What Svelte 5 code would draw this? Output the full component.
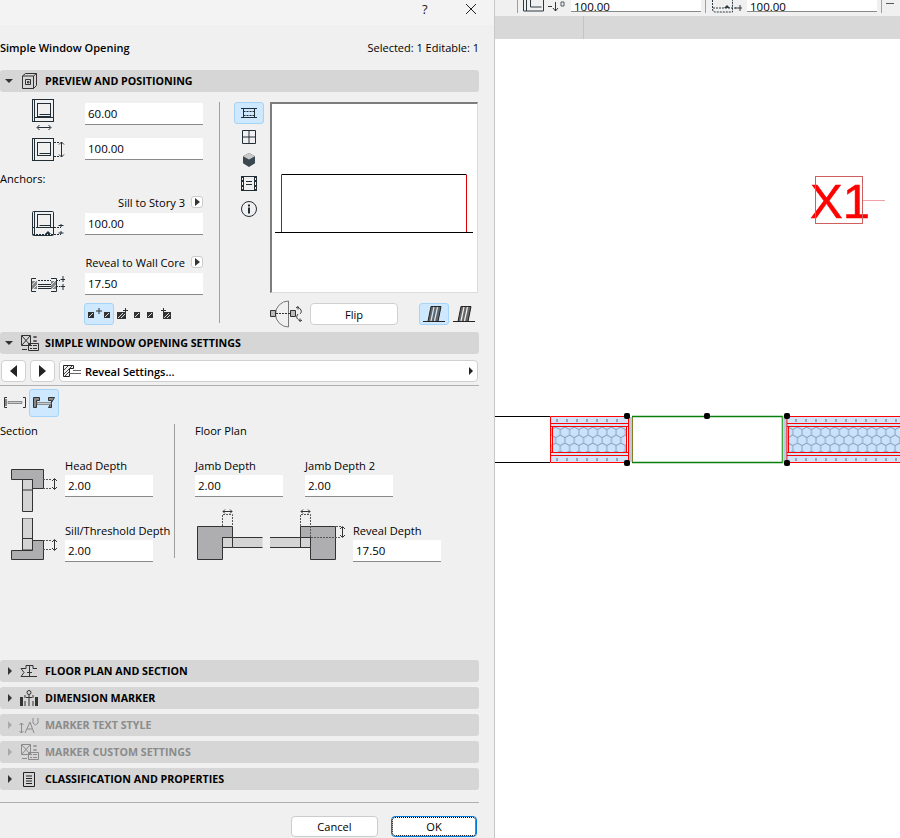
<script>
  const handles = [[627, 416], [627, 463], [707, 416], [787, 416], [787, 463]];
</script>

<div class="app">
  <div class="dialog">
    <div class="titlebar">
      <span class="help">?</span>
      <svg class="close" width="12" height="12" viewBox="0 0 12 12"><path d="M1 1l10 10M11 1L1 11" stroke="#222" fill="none"/></svg>
    </div>
    <div class="body">
      <div class="heading">
        <b>Simple Window Opening</b>
        <span>Selected: 1 Editable: 1</span>
      </div>

      <div class="bar">
        <i class="tri open"></i>
        <svg class="baricon first" width="15" height="16" viewBox="0 0 15 16"><path d="M.5 3l3-2.500h11v12l-3 3H.500zM.5 3h11v12.500M11.500 3l3-2.500" fill="none" stroke="#333"/><path d="M3.500 6.500h5v5h-5zM5.500 8.500h1.500v1.500H5.500z" fill="none" stroke="#333"/></svg>
        <span>PREVIEW AND POSITIONING</span>
      </div>

      <div class="preview-section">
        <div class="sizes">
          <div class="row">
            <svg width="26" height="33" viewBox="0 0 26 33"><g fill="none" stroke="#222e36"><rect x="1.500" y="1.500" width="21" height="22"/><path d="M3.500 1.500v22"/><rect x="6.500" y="5.500" width="13" height="13"/><path d="M8.500 16.500h11M3.500 19.500h19"/><path d="M6.500 29.500h13M8.500 27l-2.500 2.500 2.500 2.500M17.500 27l2.500 2.500-2.500 2.500"/></g></svg>
            <input value="60.00" />
          </div>
          <div class="row second">
            <svg width="34" height="25" viewBox="0 0 34 25"><g fill="none" stroke="#222e36"><rect x="1.500" y="1.500" width="21" height="22"/><path d="M3.500 1.500v22"/><rect x="6.500" y="5.500" width="13" height="13"/><path d="M8.500 16.500h11"/><path d="M23 5.500h5M23 19.500h5" stroke-dasharray="2 1"/><path d="M30.500 5v15M28 7.500L30.500 5 33 7.500M28 17.500l2.500 2.500 2.500-2.500"/></g></svg>
            <input value="100.00" />
          </div>
          <div class="anchors">Anchors:</div>
          <div class="caption"><span>Sill to Story 3</span><button class="mini"><i></i></button></div>
          <div class="row">
            <svg width="34" height="28" viewBox="0 0 34 28"><g fill="none" stroke="#222e36"><rect x="1.500" y="1.500" width="21" height="24" rx="1"/><path d="M3.500 1.500v24"/><rect x="6.500" y="4.500" width="13" height="13"/><path d="M8.500 15.500h11"/><path d="M2 17.500h28M2 24.500h28" stroke-dasharray="2 1"/><path d="M30 14v3M30 21v3M27.500 15.500h5M27.500 23h5"/></g><path d="M14 24l3-3 3 3z" fill="#222e36"/></svg>
            <input value="100.00" />
          </div>
          <div class="caption reveal"><span>Reveal to Wall Core</span><button class="mini"><i></i></button></div>
          <div class="row">
            <svg width="34" height="18" viewBox="0 0 34 18"><g fill="none" stroke="#222e36"><path d="M5 3.500H.5v13H5M20 3.500h5.500v13H20"/><path d="M7 5.500h13M25 5.500h4M25 11.500h4" stroke-dasharray="2 1"/><path d="M7 9.500h13M7 11.500h13M7 13.500h13"/><path d="M32 1v6M32 9v6M29.500 4.500h5M29.500 11.500h5"/></g><path d="M1 6h5v8H1zM20 6h5v8h-5z" fill="#888"/><path d="M1 10l4-4M2 14l4-4M20 10l4-4M21 14l4-4" stroke="#ddd"/></svg>
            <input value="17.50" />
          </div>
          <div class="anchor-icons">
            <button class="toggle active anchor-on">
              <svg width="24" height="14" viewBox="0 0 24 14"><path d="M1 5h6v6H1zM17 5h6v6h-6z" fill="#333"/><path d="M2 10l4-4M18 10l4-4" stroke="#ddd"/><path d="M12 1v6M9 4h6" stroke="#333"/></svg>
            </button>
            <svg class="a1" width="11" height="12" viewBox="0 0 11 12"><path d="M0 4h9v7H0z" fill="#333"/><path d="M1 10l5-5M4 10l4-4" stroke="#ddd"/><path d="M8.500 0v5M6 2.500h5" stroke="#333"/></svg>
            <svg class="a2" width="7" height="12" viewBox="0 0 7 12"><path d="M0 4h6v6H0z" fill="#333"/><path d="M1 9l4-4" stroke="#ddd"/></svg>
            <svg class="a3" width="7" height="12" viewBox="0 0 7 12"><path d="M0 4h6v6H0z" fill="#333"/><path d="M1 9l4-4" stroke="#ddd"/></svg>
            <svg class="a4" width="10" height="12" viewBox="0 0 10 12"><path d="M2 4h8v7H2z" fill="#333"/><path d="M3 10l5-5M6 10l3-3" stroke="#ddd"/><path d="M2.500 0v5M0 2.500h5" stroke="#333"/></svg>
          </div>
        </div>

        <div class="vline"></div>

        <div class="views">
          <button class="toggle active view">
            <svg width="18" height="12" viewBox="0 0 18 12"><g fill="none" stroke="#222e36"><path d="M1 1.500h16M1 10.500h16M3.500 1.500v9M14.500 1.500v9"/><path d="M3.500 4.500h11M3.500 8.500h11" stroke-dasharray="2 1"/></g></svg>
          </button>
          <svg class="v2" width="14" height="14" viewBox="0 0 14 14"><path d="M.5.500h13v13H.500zM7 .5v13M.5 7h13" fill="none" stroke="#222e36"/></svg>
          <svg class="v3" width="14" height="14" viewBox="0 0 14 14"><path d="M7 0l6 3.300v7L7 14l-6-3.700v-7z" fill="#3c4850"/><path d="M7 0l6 3.300L7 6.500 1 3.300z" fill="#c9c9c9"/></svg>
          <svg class="v4" width="16" height="15" viewBox="0 0 16 15"><path d="M0 0h16v15H0z" fill="#222e36"/><path d="M3 1h10v13H3z" fill="#f0f0f0"/><path d="M1 2h1v2H1zM1 6h1v3H1zM1 11h1v2H1zM14 2h1v2h-1zM14 6h1v3h-1zM14 11h1v2h-1z" fill="#f0f0f0"/><path d="M5 5.500h6M5 8.500h6" stroke="#222e36"/></svg>
          <svg class="v5" width="16" height="16" viewBox="0 0 16 16"><circle cx="8" cy="8" r="7.500" fill="none" stroke="#222e36"/><path d="M7 6.500h2v6H7zM7 3.500h2v2H7z" fill="#222e36"/></svg>
        </div>

        <div class="stage">
          <svg class="preview" width="208" height="191" viewBox="0 0 205 188">
            <path d="M9.500 70.500H194.500" stroke="#000" fill="none"/>
            <path d="M9.500 71v58M194.500 71v58" stroke="#e00000" fill="none"/>
            <path d="M3 128.500h198" stroke="#000" fill="none"/>
          </svg>
          <div class="flip-row">
            <svg width="34" height="28" viewBox="0 0 34 28"><path d="M18.500 1A13 13 0 0 0 18.500 27z" fill="none" stroke="#777"/><path d="M.5 10.500h5v6h-5zM20.500 10.500h5v6h-5z" fill="#bbb" stroke="#333"/><path d="M6 13.500h14" stroke="#333" stroke-dasharray="2 1"/><path d="M28 7c4 3 4 5 2 7M30 21c-4-3-4-4-2-7M26 8l2-1.500V9.500M32 20l-2 1.500V18.500" fill="none" stroke="#333"/></svg>
            <button class="flip">Flip</button>
            <button class="toggle active side">
              <svg width="22" height="17" viewBox="0 0 22 17"><path d="M0 15.500h22" stroke="#222"/><path d="M8 .5h10l-3 15H5z" fill="#666" stroke="#222"/><path d="M11 1L8 15M14.500 1l-3 14" stroke="#cde8ff" stroke-width="1.200"/></svg>
            </button>
            <svg class="side2" width="22" height="17" viewBox="0 0 22 17"><path d="M0 15.500h22" stroke="#222"/><path d="M8 .5h10l-3 15H5z" fill="#666" stroke="#222"/><path d="M11 1L8 15M14.500 1l-3 14" stroke="#f0f0f0" stroke-width="1.200"/></svg>
          </div>
        </div>
      </div>

      <div class="bar">
        <i class="tri open"></i>
        <svg class="baricon" width="19" height="17" viewBox="0 0 19 17"><g fill="none" stroke="#333"><path d="M1.500.5h9v10h-9zM2 1l8 9M10 1l-8 9"/><path d="M8.500 8.500h10v7h-10zM10 10.500h2M13 10.500h4M10 13.500h2M13 13.500h4"/><path d="M15 1v2M15 5v2M13 2h4M13 6h4"/><path d="M2 14.500h5"/></g></svg>
        <span>SIMPLE WINDOW OPENING SETTINGS</span>
      </div>

      <div class="pager">
        <button class="nav"><i class="left"></i></button>
        <button class="nav"><i class="right"></i></button>
        <button class="select">
          <svg width="18" height="12" viewBox="0 0 18 12"><path d="M.5.5h10v3h-4v8h-6z" fill="#f0f0f0" stroke="#222"/><path d="M1 5l4-4M1 9l8-8M2 11l4-4" stroke="#444"/><path d="M10 5.500h8M6 8.500h12" stroke="#666"/></svg>
          <span>Reveal Settings...</span>
          <i class="right small"></i>
        </button>
      </div>
      <hr class="rule" />

      <div class="type-row">
        <span class="type">
          <svg width="24" height="12" viewBox="0 0 24 12"><path d="M4 .5H1.500v10H4M20 .5h2.500v10H20" fill="none" stroke="#333"/><path d="M2 2h2v7H2z" fill="#888"/><path d="M5 4.500h14v2H5z" fill="#ccc" stroke="#777" stroke-width=".8"/></svg>
        </span>
        <button class="toggle active type-on">
          <svg width="24" height="12" viewBox="0 0 24 12"><path d="M1.500.5h6v3h-3v7h-3zM22.500.5h-6v3h3v7h-3z" fill="#888" stroke="#333"/><path d="M5 5.500h14v2H5z" fill="#ccc" stroke="#777" stroke-width=".8"/></svg>
        </button>
      </div>

      <div class="reveal-grid">
        <div class="col-section">
          <div class="group-title">Section</div>
          <div class="depth head">
            <svg width="48" height="44" viewBox="0 0 48 44"><path d="M1.500.5h32v19h-11v-9h-21z" fill="#aeaeb0" stroke="#333"/><path d="M12.500 10.500h10v32h-10z" fill="#d4d4d4" stroke="#333"/><path d="M12.500 21h10" stroke="#333"/><path d="M33 10.500h9M33 19.500h9" stroke="#555" stroke-dasharray="2 1" fill="none"/><path d="M44.500 10v10M42 12l2.500-2.500L47 12M42 18l2.500 2.500L47 18" stroke="#333" fill="none"/></svg>
            <label>Head Depth<input value="2.00" /></label>
          </div>
          <div class="depth sill">
            <svg width="48" height="44" viewBox="0 0 48 44"><path d="M12.500 0h10v32h-10z" fill="#d4d4d4" stroke="#333"/><path d="M12.500 20.500h10" stroke="#333"/><path d="M22.500 22.500h11v19h-32v-9h21z" fill="#aeaeb0" stroke="#333"/><path d="M33 22.500h9M33 31.500h9" stroke="#555" stroke-dasharray="2 1" fill="none"/><path d="M44.500 22v10M42 24l2.500-2.500L47 24M42 30l2.500 2.500L47 30" stroke="#333" fill="none"/></svg>
            <label>Sill/Threshold Depth<input value="2.00" /></label>
          </div>
        </div>
        <div class="vline tall"></div>
        <div class="col-plan">
          <div class="group-title">Floor Plan</div>
          <div class="jambs">
            <label>Jamb Depth<input value="2.00" /></label>
            <label>Jamb Depth 2<input value="2.00" /></label>
          </div>
          <div class="plan-bottom">
            <svg width="150" height="52" viewBox="0 0 150 52">
              <path d="M.5 18.500h35v11h-10v22H.500z" fill="#aeaeb0" stroke="#333"/>
              <path d="M25.500 29.500h10v10h-10zM35.500 29.500h30v10h-30z" fill="#d4d4d4"/>
              <path d="M25.500 29.500h10v10h-10zM35.500 29.500h30M35.500 39.500h30" fill="none" stroke="#333"/>
              <path d="M25.500 18V6.500h10V18" fill="none" stroke="#555" stroke-dasharray="2 1"/>
              <path d="M26 3.500h9M28 1.500l-2 2 2 2M33 1.500l2 2-2 2" fill="none" stroke="#333"/>
              <path d="M103.500 18.500h35v33h-25v-22h-10z" fill="#aeaeb0" stroke="#333"/>
              <path d="M73 29.500h30v10H73zM103.500 29.500h10v10h-10z" fill="#d4d4d4"/>
              <path d="M73 29.500h40.500M73 39.500h40.500M103.500 29.500v10M113.500 29.500v10" fill="none" stroke="#333"/>
              <path d="M103.500 18V6.500h10V29" fill="none" stroke="#555" stroke-dasharray="2 1"/>
              <path d="M104 3.500h9M106 1.500l-2 2 2 2M111 1.500l2 2-2 2" fill="none" stroke="#333"/>
              <path d="M114 29.500h30M139 18.500h5" fill="none" stroke="#555" stroke-dasharray="2 1"/>
              <path d="M145.500 19v10M143 21l2.500-2.500L148 21M143 27l2.500 2.500L148 27" fill="none" stroke="#333"/>
            </svg>
            <label class="reveal-depth">Reveal Depth<input value="17.50" /></label>
          </div>
        </div>
      </div>

      <div class="stack">
        <div class="bar closed">
          <i class="tri"></i>
          <svg class="baricon" width="18" height="12" viewBox="0 0 18 12"><path d="M1 3.500h5v-3h7v3h4M1 11.500h16M1 3.500l3 4-3 4M9.500 .5v11M7 7.500h5" fill="none" stroke="#333"/></svg>
          <span>FLOOR PLAN AND SECTION</span>
        </div>
        <div class="bar closed">
          <i class="tri"></i>
          <svg class="baricon dim" width="20" height="17" viewBox="0 0 20 17"><circle cx="10" cy="2.500" r="2" fill="none" stroke="#333"/><path d="M1 7h3v9H1zM16 7h3v9h-3z" fill="#333"/><path d="M10 5v11M7 7.500h6M6 5v3M14 5v3M6 11v5M14 11v5" stroke="#333" fill="none"/></svg>
          <span>DIMENSION MARKER</span>
        </div>
        <div class="bar closed off">
          <i class="tri"></i>
          <svg class="baricon dim" width="20" height="17" viewBox="0 0 20 17"><path d="M2.500 6v10M.5 8l2-2 2 2M.5 14l2 2 2-2M6 16l5-11 4 11M8 12h5M14 1v5l2.500 2 2.500-2V1" fill="none" stroke="#8b8b8b"/></svg>
          <span>MARKER TEXT STYLE</span>
        </div>
        <div class="bar closed off">
          <i class="tri"></i>
          <svg class="baricon" width="19" height="17" viewBox="0 0 19 17"><g fill="none" stroke="#8b8b8b"><path d="M1.500.5h9v10h-9zM2 1l8 9M10 1l-8 9"/><path d="M8.500 8.500h10v7h-10zM10 10.500h2M13 10.500h4M10 13.500h2M13 13.500h4"/><path d="M15 1v2M15 5v2M13 2h4M13 6h4"/><path d="M2 14.500h5"/></g></svg>
          <span>MARKER CUSTOM SETTINGS</span>
        </div>
        <div class="bar closed">
          <i class="tri"></i>
          <svg class="baricon doc" width="12" height="15" viewBox="0 0 12 15"><path d="M.5.500h11v14H.500zM3 4h6M3 6.500h6M3 9h6M3 11.500h6" fill="none" stroke="#222"/></svg>
          <span>CLASSIFICATION AND PROPERTIES</span>
        </div>
      </div>

      <hr class="rule foot" />
      <div class="actions">
        <button class="cancel">Cancel</button>
        <button class="ok">OK</button>
      </div>
    </div>
  </div>

  <div class="canvas">
    <div class="toolbar">
      <span class="sep first"></span>
      <svg class="tb-icon" width="46" height="16" viewBox="0 0 46 16"><path d="M4.500-3v14h17V-3" fill="none" stroke="#2c3840"/><path d="M1.500-3v14h3M8.500-3v10h11" fill="none" stroke="#2c3840"/><path d="M26 6.500h4M33.500 2v9M31 8l2.500 3L36 8" fill="none" stroke="#2c3840"/><path d="M39 2h3v4h-3z" fill="none" stroke="#2c3840" stroke-width=".8"/></svg>
      <div class="tb-input"><span>100.00</span></div>
      <span class="sep"></span>
      <svg class="tb-icon two" width="34" height="16" viewBox="0 0 34 16"><path d="M2.500-3v12c0 2 1 3 3 3h17V-3M3 8h24" fill="none" stroke="#2c3840" stroke-dasharray="2 1"/><path d="M14 8l3-3 3 3z" fill="#2c3840"/><path d="M25 8h7M30 5v6" fill="none" stroke="#2c3840"/></svg>
      <div class="tb-input"><span>100.00</span></div>
      <span class="sep"></span>
      <span class="dash"></span>
    </div>
    <div class="infobar"><span class="cell"></span></div>
    <svg class="drawing" width="405" height="799" viewBox="495 39 405 799">
      <defs>
        <pattern id="hex" x="551" y="427" width="9.300" height="16" patternUnits="userSpaceOnUse">
          <rect width="9.300" height="16" fill="#c9e3fd"/>
          <path d="M0 8V2.670L4.650 0l4.650 2.670V8L4.650 10.670zM4.650 10.670V16" fill="none" stroke="#8da0bb" stroke-width="1"/>
        </pattern>
        <pattern id="dots" x="551" y="417" width="10" height="9" patternUnits="userSpaceOnUse">
          <rect width="10" height="9" fill="#d4e4f8"/>
          <rect x="4" y="2" width="2" height="3" fill="#9aa6b8"/>
        </pattern>
      </defs>

      <text x="810" y="218" class="x1">X1</text>
      <rect x="815.500" y="176.500" width="47" height="47" fill="none" stroke="#d06060"/>
      <path d="M863 200.500h22" stroke="#f0a0a8" fill="none"/>

      <path d="M495 416.500h55M495 462.500h55" stroke="#000" fill="none"/>

      <rect x="551" y="417" width="77" height="9" fill="#d4e4f8"/>
      <rect x="551" y="427" width="76" height="25" fill="url(#hex)"/>
      <rect x="551" y="453" width="77" height="9" fill="#d4e4f8"/>
      <path d="M556 420.500h2M566 420.500h2M576 420.500h2M586 420.500h2M596 420.500h2M606 420.500h2M616 420.500h2M556 459.500h2M566 459.500h2M576 459.500h2M586 459.500h2M596 459.500h2M606 459.500h2M616 459.500h2" stroke="#9aa6b8" fill="none" stroke-width="3"/>
      <path d="M550.500 416.500h78v46h-78zM550.500 423.500h78M550.500 426.500h78M550.500 452.500h78M550.500 455.500h78M552.500 427v25M626.500 427v25" fill="none" stroke="#f00"/>

      <rect x="629" y="417" width="3" height="45" fill="#b9cbe0"/>
      <path d="M632.500 416v47" stroke="#8a7a20" fill="none"/>
      <path d="M632 416.500h150.500v46H632" fill="none" stroke="#0b7f0b" stroke-width="1.500"/>
      <path d="M782.500 416v47" stroke="#3fa83f" fill="none"/>
      <rect x="784" y="417" width="3" height="45" fill="#b9cbe0"/>

      <rect x="788" y="417" width="112" height="9" fill="#d4e4f8"/>
      <rect x="789" y="427" width="111" height="25" fill="url(#hex)"/>
      <rect x="788" y="453" width="112" height="9" fill="#d4e4f8"/>
      <path d="M795 420.500h2M805 420.500h2M815 420.500h2M825 420.500h2M835 420.500h2M845 420.500h2M855 420.500h2M865 420.500h2M875 420.500h2M885 420.500h2M895 420.500h2M795 459.500h2M805 459.500h2M815 459.500h2M825 459.500h2M835 459.500h2M845 459.500h2M855 459.500h2M865 459.500h2M875 459.500h2M885 459.500h2M895 459.500h2" stroke="#9aa6b8" fill="none" stroke-width="3"/>
      <path d="M900 416.500h-113v46h113M787 423.500h113M787 426.500h113M787 452.500h113M787 455.500h113M788.500 427v25" fill="none" stroke="#f00"/>

      {#each handles as [x, y]}
        <rect x={x - 3} y={y - 3} width="6" height="6" rx="2" fill="#000" />
      {/each}
    </svg>
  </div>
</div>

<style>
  :global(body) {
    margin: 0;
    background: #fff;
  }

  .app {
    display: flex;
    width: 900px;
    height: 838px;
    overflow: hidden;
    font-family: "Open Sans", "Noto Sans", sans-serif;
    font-size: 11.1px;
    color: #000;
  }

  button {
    font: inherit;
    color: inherit;
    padding: 0;
  }

  svg {
    display: block;
    flex: none;
  }

  input {
    box-sizing: border-box;
    width: 118px;
    height: 22px;
    padding: 0 3px;
    border: 0;
    border-bottom: 1px solid #8a8a8a;
    background: #fff;
    font: inherit;
    font-size: 11.5px;
    color: #000;
    outline: none;
  }

  .dialog {
    flex: none;
    width: 494px;
    height: 838px;
    background: #f0f0f0;
  }

  .titlebar {
    position: relative;
    height: 25px;
    background: #f3f3f3;
  }

  .help {
    position: absolute;
    left: 422px;
    top: 0;
    font-size: 13px;
    color: #222;
  }

  .close {
    position: absolute;
    left: 465px;
    top: 3px;
  }

  .body {
    padding-right: 15px;
  }

  .heading {
    display: flex;
    justify-content: space-between;
    align-items: center;
    height: 45px;
    font-size: 11px;
  }

  .heading b {
    font-weight: 600;
  }

  .bar {
    display: flex;
    align-items: center;
    height: 22px;
    background: #d6d6d6;
    border-radius: 3px;
    font-size: 10.7px;
    font-weight: 700;
    position: relative;
  }

  .bar span {
    position: absolute;
    left: 45px;
    top: 3.500px;
  }

  .bar.off {
    color: #8b8b8b;
  }

  .tri {
    display: block;
    margin-left: 8px;
    width: 0;
    height: 0;
    border-left: 4px solid #333;
    border-top: 4px solid transparent;
    border-bottom: 4px solid transparent;
  }

  .tri.open {
    margin-left: 5px;
    border-top: 4px solid #333;
    border-left: 4px solid transparent;
    border-right: 4px solid transparent;
    border-bottom: 0;
  }

  .off .tri {
    border-left-color: #aaa;
  }

  .baricon {
    margin-left: 7px;
  }

  .baricon.first {
    margin-left: 9px;
  }

  .closed .baricon {
    margin-left: 8px;
  }

  .closed .baricon.dim {
    margin-left: 7px;
  }

  .closed .baricon.doc {
    margin-left: 11px;
  }

  .preview-section {
    display: flex;
    height: 240px;
  }

  .sizes {
    width: 219px;
    flex: none;
  }

  .row {
    display: flex;
    align-items: center;
    justify-content: space-between;
    width: 203px;
    padding-left: 31px;
    box-sizing: border-box;
    height: 22px;
    margin-top: 11px;
  }

  .row.second {
    margin-top: 13px;
  }

  .anchors {
    margin-top: 12px;
    height: 14px;
    line-height: 14px;
  }

  .caption {
    display: flex;
    justify-content: flex-end;
    align-items: center;
    gap: 6px;
    width: 203px;
    height: 14px;
    margin-top: 9px;
  }

  .caption.reveal {
    margin-top: 20px;
  }

  .caption + .row {
    margin-top: 4px;
  }

  .mini {
    box-sizing: border-box;
    width: 12px;
    height: 12px;
    border: 1px solid #ccc;
    border-radius: 3px;
    background: #fff;
    display: flex;
    align-items: center;
    justify-content: center;
  }

  .mini i {
    width: 0;
    height: 0;
    border-left: 5px solid #333;
    border-top: 4px solid transparent;
    border-bottom: 4px solid transparent;
  }

  .anchor-icons {
    display: flex;
    align-items: center;
    margin: 8px 0 0 84px;
  }

  .a1 {
    margin-left: 3px;
  }

  .a2 {
    margin-left: 6px;
  }

  .a3 {
    margin-left: 6px;
  }

  .a4 {
    margin-left: 7px;
  }

  .toggle {
    display: flex;
    align-items: center;
    justify-content: center;
    box-sizing: border-box;
    border: 1px solid #a6d4f7;
    border-radius: 3px;
  }

  .toggle.active {
    background: #cde8ff;
  }

  .anchor-on {
    width: 30px;
    height: 22px;
  }

  .vline {
    flex: none;
    width: 1px;
    height: 221px;
    margin-top: 10px;
    background: #a0a0a0;
  }

  .views {
    flex: none;
    width: 36px;
    margin-left: 14px;
    padding-top: 10px;
  }

  .view {
    width: 30px;
    height: 22px;
  }

  .views svg {
    margin-left: 8px;
  }

  .views .toggle svg {
    margin-left: 0;
  }

  .v2 {
    margin-top: 6px;
  }

  .v3 {
    margin-top: 9px;
  }

  .v4 {
    margin-top: 9px;
    transform: translateX(-1px);
  }

  .v5 {
    margin-top: 10px;
    transform: translateX(-1px);
  }

  .stage {
    padding-top: 10px;
  }

  .preview {
    box-sizing: border-box;
    background: #fff;
    border-top: 2px solid #7d7d7d;
    border-left: 2px solid #7d7d7d;
    border-right: 1px solid #dcdcdc;
    border-bottom: 1px solid #dcdcdc;
  }

  .flip-row {
    display: flex;
    align-items: center;
    margin-top: 7px;
    height: 28px;
  }

  .flip {
    box-sizing: border-box;
    width: 88px;
    height: 22px;
    margin-left: 6px;
    background: #fff;
    border: 1px solid #d0d0d0;
    border-radius: 4px;
  }

  .side {
    width: 30px;
    height: 22px;
    margin-left: 21px;
  }

  .side2 {
    margin-left: 4px;
  }

  .pager {
    display: flex;
    gap: 4px;
    padding: 6px 1px 0 1px;
  }

  .nav {
    box-sizing: border-box;
    width: 25px;
    height: 22px;
    background: #fff;
    border: 1px solid #d0d0d0;
    border-radius: 4px;
    display: flex;
    align-items: center;
    justify-content: center;
  }

  .left {
    border-right: 7px solid #222;
    border-top: 6px solid transparent;
    border-bottom: 6px solid transparent;
  }

  .right {
    border-left: 7px solid #222;
    border-top: 6px solid transparent;
    border-bottom: 6px solid transparent;
  }

  .select {
    box-sizing: border-box;
    flex: 1;
    height: 22px;
    display: flex;
    align-items: center;
    background: #fff;
    border: 1px solid #d0d0d0;
    border-radius: 4px;
    padding: 0 4px 0 3px;
    font-size: 11px;
    font-weight: 600;
  }

  .select span {
    margin-left: 4px;
    flex: 1;
    text-align: left;
  }

  .right.small {
    border-left-width: 4px;
    border-top-width: 4px;
    border-bottom-width: 4px;
  }

  .rule {
    margin: 3px 0 0;
    border: 0;
    height: 1px;
    background: #b0b0b0;
  }

  .type-row {
    display: flex;
    align-items: center;
    height: 28px;
    margin-top: 3px;
  }

  .type {
    width: 29px;
    display: flex;
    justify-content: center;
  }

  .type-on {
    width: 30px;
    height: 28px;
  }

  .reveal-grid {
    display: flex;
    height: 243px;
  }

  .col-section {
    width: 174px;
    flex: none;
  }

  .group-title {
    height: 14px;
    line-height: 14px;
    margin-top: 7px;
  }

  .depth {
    display: flex;
    align-items: flex-start;
    gap: 7px;
    height: 38px;
    padding-left: 10px;
  }

  .head {
    margin-top: 21px;
  }

  .head svg {
    margin-top: 10px;
  }

  .sill {
    margin-top: 27px;
  }

  .sill svg {
    margin-top: -6px;
  }

  label {
    display: block;
    line-height: 14px;
  }

  label input {
    display: block;
    width: 88px;
    margin-top: 2px;
  }

  .vline.tall {
    height: 134px;
    margin-top: 7px;
    margin-right: 20px;
  }

  .jambs {
    display: flex;
    gap: 22px;
    height: 38px;
    margin-top: 21px;
  }

  .plan-bottom {
    display: flex;
    align-items: flex-start;
    margin-top: 11px;
    height: 54px;
  }

  .plan-bottom svg {
    margin-left: 2px;
  }

  .reveal-depth {
    margin: 16px 0 0 6px;
  }

  .stack {
    display: flex;
    flex-direction: column;
    gap: 5px;
  }

  .foot {
    margin-top: 12px;
  }

  .actions {
    display: flex;
    justify-content: flex-end;
    gap: 13px;
    padding: 13px 2px 0 0;
  }

  .cancel,
  .ok {
    box-sizing: border-box;
    width: 87px;
    height: 21px;
    background: #fff;
    border: 1px solid #ccc;
    border-radius: 4px;
  }

  .ok {
    width: 86px;
    border-color: #0078d7;
    outline: 1px dotted #000;
    outline-offset: -2px;
  }

  .canvas {
    flex: 1;
    border-left: 1px solid #c8c8c8;
    background: #fff;
  }

  .toolbar {
    display: flex;
    align-items: flex-start;
    height: 16px;
    background: #f0f0f0;
    overflow: hidden;
  }

  .sep {
    flex: none;
    width: 1px;
    height: 13px;
    background: #a0a0a0;
    margin: 0 4px 0 4px;
  }

  .sep.first {
    margin-left: 22px;
  }

  .tb-icon {
    margin-right: 3px;
  }

  .tb-input {
    flex: none;
    box-sizing: border-box;
    width: 130px;
    height: 12px;
    background: #fff;
    border-bottom: 1px solid #8a8a8a;
    font-size: 11.5px;
    position: relative;
    overflow: hidden;
  }

  .tb-input span {
    position: absolute;
    left: 3px;
    bottom: -3px;
  }

  .dash {
    width: 8px;
    height: 1px;
    margin-top: 3px;
    background: #555;
  }

  .infobar {
    height: 23px;
    background: #d8d8d8;
  }

  .cell {
    display: block;
    width: 88px;
    height: 100%;
    border-right: 1px solid #c4c4c4;
  }

  .x1 {
    font-family: "Liberation Sans", Arial, sans-serif;
    font-size: 49px;
    fill: #f00;
    stroke: #f00;
    stroke-width: 0.5px;
  }
</style>
